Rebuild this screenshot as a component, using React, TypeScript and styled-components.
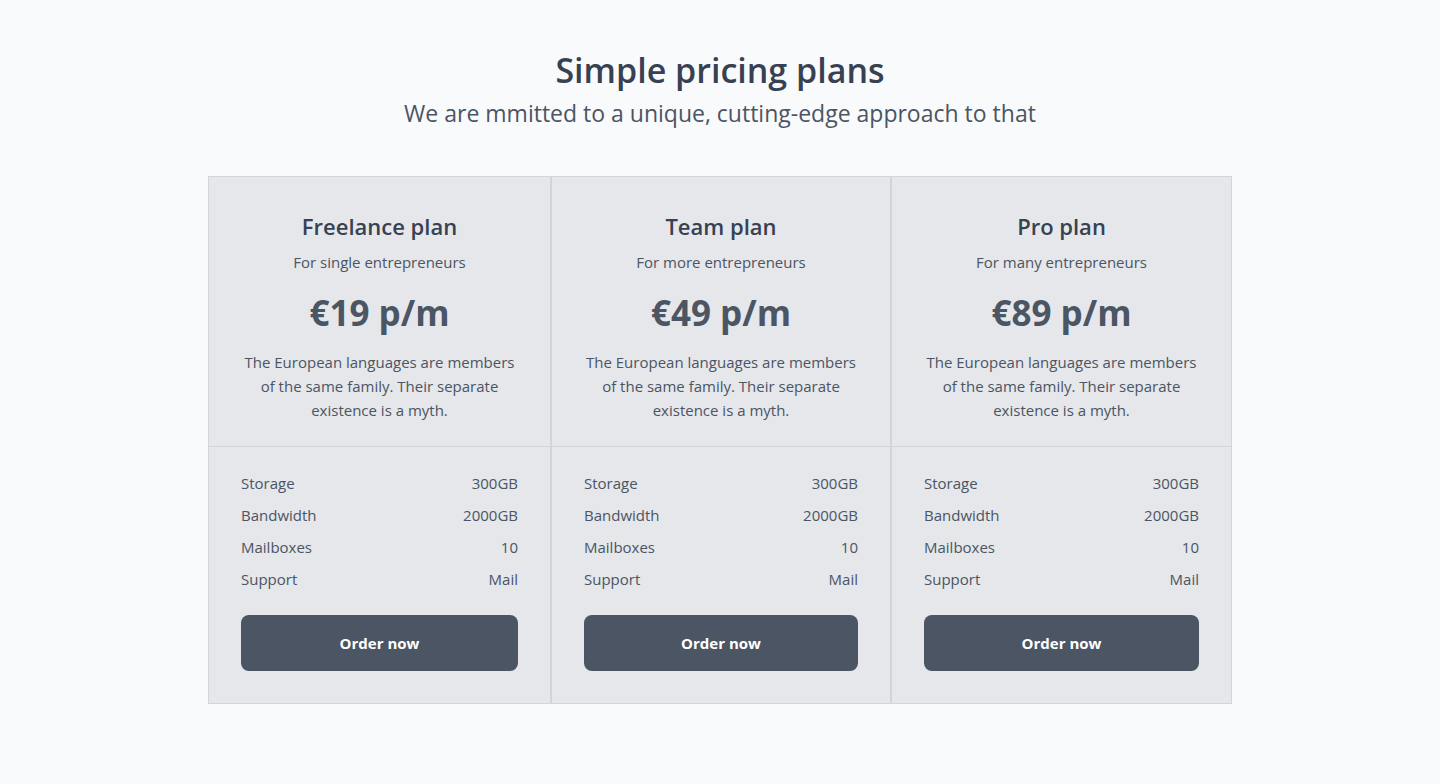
import React from 'react';
import styled, { createGlobalStyle } from 'styled-components';

const GlobalStyle = createGlobalStyle`
  html, body {
    margin: 0;
    padding: 0;
    background-color: #f9fafb;
    font-family: "Open Sans", "Noto Sans", sans-serif;
    color: #4b5563;
  }
  * {
    box-sizing: border-box;
  }
`;

interface Plan {
  name: string;
  audience: string;
  price: string;
}

const plans: Plan[] = [
  { name: 'Freelance plan', audience: 'For single entrepreneurs', price: '€19 p/m' },
  { name: 'Team plan', audience: 'For more entrepreneurs', price: '€49 p/m' },
  { name: 'Pro plan', audience: 'For many entrepreneurs', price: '€89 p/m' },
];

const features = [
  { label: 'Storage', value: '300GB' },
  { label: 'Bandwidth', value: '2000GB' },
  { label: 'Mailboxes', value: '10' },
  { label: 'Support', value: 'Mail' },
];

const Section = styled.section`
  padding: 50px 0 80px;
  display: flex;
  flex-direction: column;
  align-items: center;
`;

const Heading = styled.h2`
  margin: 0;
  font-size: 34px;
  line-height: 40px;
  font-weight: 600;
  color: #374151;
`;

const Lead = styled.p`
  margin: 7px 0 0;
  font-size: 23px;
  line-height: 32px;
  color: #4b5563;
`;

const Grid = styled.div`
  margin-top: 47px;
  width: 1024px;
  display: grid;
  grid-template-columns: 343px 340px 341px;
`;

const Card = styled.div`
  background-color: #e5e7eb;
  border: 1px solid #d1d5db;
  display: flex;
  flex-direction: column;
`;

const CardTop = styled.div`
  padding: 33px 32px 24px;
  text-align: center;
  border-bottom: 1px solid #d1d5db;
`;

const PlanName = styled.h3`
  margin: 0;
  font-size: 22px;
  line-height: 32px;
  font-weight: 600;
  color: #374151;
`;

const Audience = styled.p`
  margin: 8px 0 0;
  font-size: 15px;
  line-height: 24px;
  color: #4b5563;
`;

const Price = styled.div`
  margin-top: 15px;
  font-size: 35px;
  line-height: 48px;
  font-weight: 700;
  color: #4b5563;
`;

const Description = styled.p`
  margin: 13px 0 0;
  font-size: 15px;
  line-height: 24px;
  color: #4b5563;
`;

const CardBottom = styled.div`
  padding: 24px 32px 32px;
  display: flex;
  flex-direction: column;
`;

const FeatureList = styled.ul`
  list-style: none;
  margin: 0;
  padding: 0;
  display: flex;
  flex-direction: column;
  gap: 8px;
`;

const FeatureRow = styled.li`
  display: flex;
  justify-content: space-between;
  font-size: 15px;
  line-height: 24px;
  color: #4b5563;
`;

const OrderButton = styled.button`
  margin-top: 24px;
  height: 56px;
  width: 100%;
  border: none;
  border-radius: 8px;
  background-color: #4b5563;
  color: #ffffff;
  font-family: inherit;
  font-size: 15px;
  font-weight: 700;
  cursor: pointer;
`;

export default function App() {
  return (
    <>
      <GlobalStyle />
      <Section>
        <Heading>Simple pricing plans</Heading>
        <Lead>We are mmitted to a unique, cutting-edge approach to that</Lead>
        <Grid>
          {plans.map((plan) => (
            <Card key={plan.name}>
              <CardTop>
                <PlanName>{plan.name}</PlanName>
                <Audience>{plan.audience}</Audience>
                <Price>{plan.price}</Price>
                <Description>
                  The European languages are members of the same family. Their separate existence is a myth.
                </Description>
              </CardTop>
              <CardBottom>
                <FeatureList>
                  {features.map((f) => (
                    <FeatureRow key={f.label}>
                      <span>{f.label}</span>
                      <span>{f.value}</span>
                    </FeatureRow>
                  ))}
                </FeatureList>
                <OrderButton>Order now</OrderButton>
              </CardBottom>
            </Card>
          ))}
        </Grid>
      </Section>
    </>
  );
}
